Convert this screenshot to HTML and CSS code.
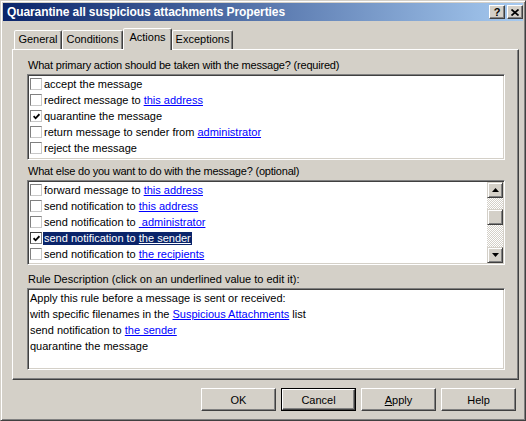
FILE: index.html
```html
<!DOCTYPE html>
<html>
<head>
<meta charset="utf-8">
<link rel="stylesheet" href="styles.css">
</head>
<body>
<div class="window">
  <div class="titlebar">
    <span class="title">Quarantine all suspicious attachments Properties</span>
    <div class="tb-buttons">
      <span class="tb-btn help">?</span>
      <span class="tb-btn close"><svg width="8" height="7" viewBox="0 0 8 7"><path d="M0.5 0.5 L7.5 6.5 M7.5 0.5 L0.5 6.5" stroke="#000" stroke-width="1.7" fill="none"/></svg></span>
    </div>
  </div>
  <div class="client">
    <div class="tabs">
      <div class="tab t-general">General</div>
      <div class="tab t-conditions">Conditions</div>
      <div class="tab t-actions active">Actions</div>
      <div class="tab t-exceptions">Exceptions</div>
    </div>
    <div class="panel">
      <div class="label tight">What primary action should be taken with the message? (required)</div>
      <div class="listbox list1">
        <div class="row"><span class="cb"></span><span class="txt">accept the message</span></div>
        <div class="row"><span class="cb"></span><span class="txt">redirect message to <span class="lk">this address</span></span></div>
        <div class="row"><span class="cb"><svg width="7" height="7" viewBox="0 0 7 7"><path d="M0.6 3.2 L2.6 5.3 L6.4 1.2" stroke="#000" stroke-width="1.8" fill="none"/></svg></span><span class="txt">quarantine the message</span></div>
        <div class="row"><span class="cb"></span><span class="txt">return message to sender from <span class="lk">administrator</span></span></div>
        <div class="row"><span class="cb"></span><span class="txt">reject the message</span></div>
      </div>
      <div class="label tight l2">What else do you want to do with the message? (optional)</div>
      <div class="listbox list2">
        <div class="rows">
          <div class="row"><span class="cb"></span><span class="txt">forward message to <span class="lk">this address</span></span></div>
          <div class="row"><span class="cb"></span><span class="txt">send notification to <span class="lk">this address</span></span></div>
          <div class="row"><span class="cb"></span><span class="txt">send notification to <span class="lk">&nbsp;administrator</span></span></div>
          <div class="row sel"><span class="cb"><svg width="7" height="7" viewBox="0 0 7 7"><path d="M0.6 3.2 L2.6 5.3 L6.4 1.2" stroke="#000" stroke-width="1.8" fill="none"/></svg></span><span class="txt">send notification to <span class="lk">the sender</span></span></div>
          <div class="row"><span class="cb"></span><span class="txt">send notification to <span class="lk">the recipients</span></span></div>
        </div>
        <div class="scrollbar">
          <div class="sb-btn"><svg width="7" height="4" viewBox="0 0 7 4"><path d="M3.5 0 L7 4 L0 4 Z" fill="#000"/></svg></div>
          <div class="sb-track">
            <div class="sb-thumb"></div>
          </div>
          <div class="sb-btn"><svg width="7" height="4" viewBox="0 0 7 4"><path d="M0 0 L7 0 L3.5 4 Z" fill="#000"/></svg></div>
        </div>
      </div>
      <div class="label l3">Rule Description (click on an underlined value to edit it):</div>
      <div class="listbox desc">
        <div class="dline">Apply this rule before a message is sent or received:</div>
        <div class="dline">with specific filenames in the <span class="lk">Suspicious Attachments</span> list</div>
        <div class="dline">send notification to <span class="lk">the sender</span></div>
        <div class="dline">quarantine the message</div>
      </div>
    </div>
    <div class="buttons">
      <div class="btn">OK</div>
      <div class="btn default"><span class="inner">Cancel</span></div>
      <div class="btn"><u>A</u>pply</div>
      <div class="btn">Help</div>
    </div>
  </div>
</div>
</body>
</html>
```
FILE: styles.css
```css
* { box-sizing: border-box; }
html, body { margin: 0; padding: 0; }
body {
  width: 526px;
  height: 421px;
  overflow: hidden;
  background: #d4d0c8;
  font-family: "Liberation Sans", Arial, sans-serif;
  font-size: 11px;
  color: #000;
}
.window {
  width: 526px;
  height: 421px;
  background: #d4d0c8;
  border: 1px solid;
  border-color: #d4d0c8 #404040 #404040 #d4d0c8;
  box-shadow: inset 1px 1px #fff, inset -1px -1px #808080;
  padding: 2px;
  display: flex;
  flex-direction: column;
}
.titlebar {
  height: 18px;
  flex: none;
  background: linear-gradient(to right, #0a246a, #a6caf0);
  display: flex;
  align-items: center;
  justify-content: space-between;
  padding: 0 0 0 4px;
}
.title {
  color: #fff;
  font-weight: bold;
  font-size: 12px;
  letter-spacing: -0.1px;
  white-space: nowrap;
}
.tb-buttons { display: flex; gap: 2px; }
.tb-btn {
  width: 16px;
  height: 14px;
  background: #d4d0c8;
  border: 1px solid;
  border-color: #fff #404040 #404040 #fff;
  box-shadow: inset -1px -1px #808080;
  display: flex;
  align-items: center;
  justify-content: center;
  font-weight: bold;
  font-size: 11px;
  line-height: 12px;
}
.client {
  flex: 1;
  display: flex;
  flex-direction: column;
  padding: 7px 0 0 9px;
}
.tabs {
  display: flex;
  align-items: flex-end;
  height: 21px;
  padding-left: 2px;
  position: relative;
  z-index: 2;
}
.tab {
  height: 19px;
  border: 1px solid;
  border-bottom: none;
  border-color: #fff #404040 transparent #fff;
  box-shadow: inset -1px 0 #808080;
  border-radius: 2px 2px 0 0;
  text-align: center;
  line-height: 16px;
  background: #d4d0c8;
}
.t-general { width: 48px; }
.t-conditions { width: 61px; }
.t-actions { width: 49px; }
.t-exceptions { width: 61px; }
.tab.active {
  height: 22px;
  margin-bottom: -1px;
  line-height: 17px;
}
.panel {
  width: 507px;
  height: 331px;
  flex: none;
  border: 1px solid;
  border-color: #fff #404040 #404040 #fff;
  box-shadow: inset -1px -1px #808080;
  padding: 9px 13px 0 14px;
  position: relative;
  z-index: 1;
}
.label {
  height: 13px;
  line-height: 13px;
  margin-bottom: 2px;
  padding-left: 1px;
  white-space: nowrap;
}
.label.tight { letter-spacing: -0.2px; }
.l2 { margin-top: 5px; }
.l3 { margin-top: 8px; }
.listbox {
  background: #fff;
  border: 1px solid;
  border-color: #808080 #fff #fff #808080;
  box-shadow: inset 1px 1px #404040, inset -1px -1px #d4d0c8;
  padding: 1px;
}
.list1 { height: 86px; }
.list2 { height: 85px; display: flex; }
.rows { flex: 1; }
.desc { height: 82px; padding: 1px 2px; }
.row {
  height: 16px;
  display: flex;
  align-items: center;
  white-space: nowrap;
}
.cb {
  width: 12px;
  height: 12px;
  margin-left: 1px;
  border: 1px solid;
  border-color: #808080 #c8c8c8 #c8c8c8 #808080;
  background: #fff;
  display: flex;
  align-items: center;
  justify-content: center;
}
.txt {
  margin-left: 1px;
  padding: 0 1px;
  line-height: 13px;
}
.lk { color: #0000ff; text-decoration: underline; }
.sel .txt { background: #0a246a; color: #fff; }
.sel .lk { color: #fff; }
.sel .cb { border-color: #404040 #808080 #808080 #404040; }
.scrollbar {
  width: 16px;
  display: flex;
  flex-direction: column;
}
.sb-btn {
  height: 16px;
  flex: none;
  background: #d4d0c8;
  border: 1px solid;
  border-color: #d4d0c8 #404040 #404040 #d4d0c8;
  box-shadow: inset 1px 1px #fff, inset -1px -1px #808080;
  display: flex;
  align-items: center;
  justify-content: center;
}
.sb-track {
  flex: 1;
  background: repeating-conic-gradient(#fff 0 25%, #d4d0c8 0 50%) 0 0 / 2px 2px;
  padding-top: 11px;
}
.sb-thumb {
  height: 16px;
  background: #d4d0c8;
  border: 1px solid;
  border-color: #d4d0c8 #404040 #404040 #d4d0c8;
  box-shadow: inset 1px 1px #fff, inset -1px -1px #808080;
}
.dline {
  height: 16px;
  line-height: 16px;
  white-space: nowrap;
}
.buttons {
  width: 507px;
  display: flex;
  justify-content: flex-end;
  gap: 5px;
  margin-top: 8px;
  padding-right: 3px;
}
.btn {
  width: 75px;
  height: 23px;
  background: #d4d0c8;
  border: 1px solid;
  border-color: #fff #404040 #404040 #fff;
  box-shadow: inset -1px -1px #808080;
  display: flex;
  align-items: center;
  justify-content: center;
}
.btn.default {
  border: 1px solid #000;
  box-shadow: none;
  padding: 0;
}
.btn.default .inner {
  width: 100%;
  height: 100%;
  border: 1px solid;
  border-color: #fff #404040 #404040 #fff;
  box-shadow: inset -1px -1px #808080;
  display: flex;
  align-items: center;
  justify-content: center;
}
```
